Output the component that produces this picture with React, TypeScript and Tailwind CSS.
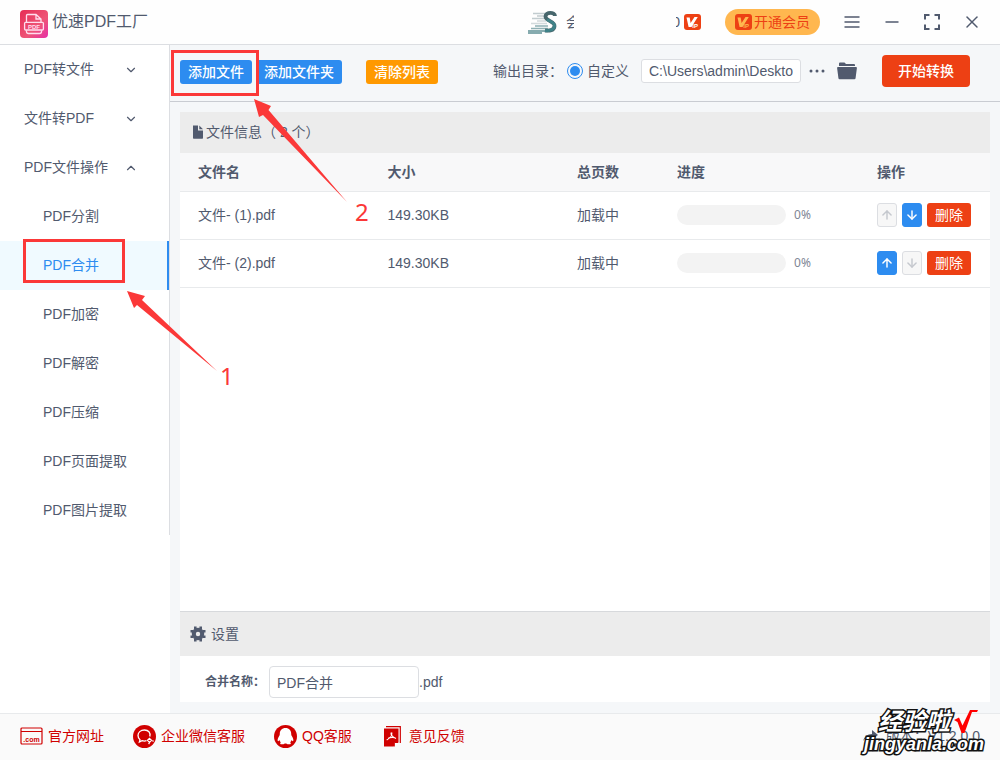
import { useState } from "react";
import { ChevronDown, ChevronUp, X, ArrowUp, ArrowDown } from "lucide-react";

const groups = [
  { title: "PDF转文件", open: false },
  { title: "文件转PDF", open: false },
  { title: "PDF文件操作", open: true },
];

const tools = ["PDF分割", "PDF合并", "PDF加密", "PDF解密", "PDF压缩", "PDF页面提取", "PDF图片提取"];

const files = [
  { name: "文件- (1).pdf", size: "149.30KB", pages: "加载中", progress: 0 },
  { name: "文件- (2).pdf", size: "149.30KB", pages: "加载中", progress: 0 },
];

function Logo() {
  return (
    <svg viewBox="0 0 28 28" className="mt-[3px] size-7 shrink-0" aria-hidden="true">
      <defs>
        <linearGradient id="logo" x1="0" y1="0" x2="1" y2="1">
          <stop offset="0" stopColor="#e62c55" />
          <stop offset="0.6" stopColor="#ee5577" />
          <stop offset="1" stopColor="#e62ea8" />
        </linearGradient>
      </defs>
      <rect width="28" height="28" rx="4" fill="url(#logo)" />
      <g fill="none" stroke="#fde" strokeWidth="1.3">
        <path d="M6.5 12V5.5a1 1 0 0 1 1-1h8.5l5 4.5v3M16 4.7V9h4.8" />
        <rect x="4.600" y="12.300" width="18.800" height="7.700" rx="1" />
        <path d="M6.500 20.300v1.500q0 1.700 2 1.700h11q2 0 2-1.700v-1.500" />
      </g>
      <text x="14" y="18.500" textAnchor="middle" fontSize="6" fontWeight="700" fontFamily="Liberation Sans, sans-serif" fill="#fde">PDF</text>
    </svg>
  );
}

function Avatar() {
  return (
    <svg viewBox="0 0 30 24" className="h-6 w-[30px]" aria-hidden="true">
      <g stroke="#a9b7bc" strokeWidth="1.500">
        <path d="M5 3.500h13M9 6h8M4 8.500h13" opacity="0.700" />
        <path d="M9 11h9M3 13.500h16" opacity="0.500" />
        <path d="M7 16h13M3 18.500h17" stroke="#8fb0b4" />
        <path d="M0 21h20M0 23h14" stroke="#5f9095" />
      </g>
      <path d="M27 6C27 2 17.500 1.500 17.500 6.500c0 4.500 9.500 5 9 9.500-.3 4.500-5 5-9.500 4.500" fill="none" stroke="#47666c" strokeWidth="3.800" />
      <path d="M19 9.500c3 2 8 3 7.500 6.500-.3 4-5 5-9.500 4.500" fill="none" stroke="#3f8288" strokeWidth="3" />
    </svg>
  );
}

function VipBadge({ cutout = "#fff" }: { cutout?: string }) {
  return (
    <svg viewBox="0 0 17 16" className="h-4 w-[17px] shrink-0" aria-hidden="true">
      <rect width="17" height="16" rx="3" fill="#ed4014" />
      <path d="M2.500 3.500h3.200l.9 5.500L10.500 3h3.300L7.500 13H4.600z" fill={cutout} />
      <text x="8.300" y="13.700" fontSize="6" fontWeight="700" fontFamily="Liberation Sans, sans-serif" fill={cutout}>IP</text>
    </svg>
  );
}

function Folder() {
  return (
    <svg viewBox="0 0 20 18" className="h-[18px] w-5" aria-hidden="true">
      <path d="M2 4V1.500Q2 .5 3 .5h4.500L9 2h8q1 0 1 1v1z" fill="#515a6e" />
      <path d="M1 5h18q1 0 .9 1L18.600 16q-.1 1.200-1.200 1.200H2.600q-1.100 0-1.200-1.200L.1 6Q0 5 1 5z" fill="#515a6e" />
    </svg>
  );
}

function Gear() {
  return (
    <svg viewBox="0 0 16 16" className="size-4" aria-hidden="true">
      <circle cx="8" cy="8" r="4.200" fill="none" stroke="#515a6e" strokeWidth="4" />
      <path d="M5.300.5v15M10.700.5v15M.5 5.300h15M.5 10.700h15" stroke="#515a6e" strokeWidth="2.600" strokeDasharray="2.500 10" />
    </svg>
  );
}

function Site() {
  return (
    <svg viewBox="0 0 23 18" className="h-[18px] w-[23px]" aria-hidden="true">
      <rect x="1" y="1" width="21" height="16" rx="1" fill="none" stroke="#d00000" strokeWidth="1.200" />
      <path d="M1 4.500h21" stroke="#d00000" />
      <text x="11.500" y="14.500" textAnchor="middle" fontSize="7" fontWeight="700" fontFamily="Liberation Sans, sans-serif" fill="#d00000">.com</text>
    </svg>
  );
}

function Wechat() {
  return (
    <svg viewBox="0 0 23 23" className="size-[23px]" aria-hidden="true">
      <circle cx="11.500" cy="11.500" r="11.500" fill="#d00000" />
      <path d="M16.800 11.500c1-4-1.500-6.500-5.300-6.500-4 0-6.500 2.500-6.500 5.500 0 2 .9 3.200 2 4.200l-.6 2.300 2.600-1.300q2.400.7 4.500 0" fill="none" stroke="#fff" strokeWidth="1.300" />
      <path d="M16.500 13.300l2 2-2 2-2-2zM19.500 15.500l1 1M15.500 18l1 1" fill="none" stroke="#fff" strokeWidth="1.200" />
    </svg>
  );
}

function QQ() {
  return (
    <svg viewBox="0 0 23 23" className="size-[23px]" aria-hidden="true">
      <circle cx="11.500" cy="11.500" r="11.500" fill="#d00000" />
      <path d="M11.500 3c-3.700 0-5.700 2.500-5.700 5.800 0 1.200-.2 1.800-.9 2.800-1 1.500-1.600 3.500-1.100 4.500.5.500 1.200-.3 1.700-1 .2 1 .7 1.700 1.300 2.300-1.100.5-.8 1.900 1 1.900 1.300 0 2.300-.4 3-.9h1.400c.7.500 1.700.9 3 .9 1.800 0 2.100-1.400 1-1.900.6-.6 1.100-1.300 1.300-2.300.5.700 1.200 1.500 1.700 1 .5-1-.1-3-1.100-4.500-.7-1-.9-1.600-.9-2.800C17.200 5.500 15.200 3 11.500 3z" fill="#fff" />
    </svg>
  );
}

function Feedback() {
  return (
    <svg viewBox="-3 0 23 21" className="h-[21px] w-[23px]" aria-hidden="true">
      <path d="M2 .7h14.300V17" fill="none" stroke="#d00000" strokeWidth="1.200" />
      <path d="M0 2.500h14.500V15.500l-5 5H0z" fill="#d00000" />
      <path d="M14.300 16.500h-4v4" fill="#fff" stroke="#d00000" />
      <path d="M7.300 6.500c-1.200 2 1 4.500 4.700 6M7.700 6.500c1 3-1.500 5.500-5 7.500M4 12.500c2-1.200 4.500-1.300 7-.8" fill="none" stroke="#fff" strokeWidth="1.100" />
    </svg>
  );
}

const links = [
  { label: "官方网址", icon: <Site /> },
  { label: "企业微信客服", icon: <Wechat /> },
  { label: "QQ客服", icon: <QQ /> },
  { label: "意见反馈", icon: <Feedback /> },
];

function MoveButton({ up, disabled }: { up?: boolean; disabled: boolean }) {
  const Icon = up ? ArrowUp : ArrowDown;
  return (
    <button
      aria-label={up ? "上移" : "下移"}
      disabled={disabled}
      className="flex h-6 w-5 items-center justify-center rounded-[3px] border border-[#2d8cf0] bg-[#2d8cf0] text-white disabled:border-[#dcdee2] disabled:bg-[#f7f7f7] disabled:text-[#c5c8ce]"
    >
      <Icon className="size-3.5 shrink-0" strokeWidth={2.500} />
    </button>
  );
}

function Header() {
  return (
    <header className="flex h-[45px] items-center border-b border-[#dcdee2] bg-[#fefefe] pr-[18px] pl-5">
      <Logo />
      <h1 className="ml-1 text-base">优速PDF工厂</h1>
      <div className="ml-auto flex items-center">
        <Avatar />
        <span className="ml-2 w-2 overflow-hidden text-sm whitespace-nowrap">会</span>
        <span className="ml-[102px] flex w-1 justify-end overflow-hidden text-sm">0</span>
        <span className="ml-1"><VipBadge /></span>
        <button className="ml-6 flex h-[26px] items-center gap-0.5 rounded-full bg-[#ffb74f] px-2.5 text-sm text-[#ed4014]">
          <VipBadge cutout="#ffb74f" />
          开通会员
        </button>
        <div className="ml-[22px] flex items-center gap-5">
          <button aria-label="菜单">
            <svg viewBox="0 0 20 20" className="size-5" fill="none" stroke="currentColor" strokeWidth="1.500">
              <path d="M2.500 5h15M2.500 10h15M2.500 15h15" />
            </svg>
          </button>
          <button aria-label="最小化">
            <svg viewBox="0 0 20 20" className="size-5" fill="none" stroke="currentColor" strokeWidth="1.500">
              <path d="M3.500 10h13" />
            </svg>
          </button>
          <button aria-label="最大化">
            <svg viewBox="0 0 20 20" className="size-5" fill="none" stroke="currentColor" strokeWidth="2">
              <path d="M3 7.500V3h4.500M12.500 3H17v4.500M17 12.500V17h-4.500M7.500 17H3v-4.500" />
            </svg>
          </button>
          <button aria-label="关闭"><X className="size-5" strokeWidth={1.800} /></button>
        </div>
      </div>
    </header>
  );
}

function Sidebar() {
  const [active, setActive] = useState("PDF合并");
  return (
    <aside className="w-[170px] shrink-0 bg-white">
      <nav className="border-r border-[#dcdee2]">
        {groups.map((g) => (
          <button key={g.title} aria-expanded={g.open} className="flex h-[49px] w-full items-center justify-between pr-[31px] pb-0.5 pl-6">
            {g.title}
            {g.open ? <ChevronUp className="mt-0.5 size-3.5" /> : <ChevronDown className="mt-0.5 size-3.5" />}
          </button>
        ))}
        {tools.map((t) => (
          <button
            key={t}
            onClick={() => setActive(t)}
            className={
              t === active
                ? "flex h-[49px] w-full items-center border-r-2 border-[#2d8cf0] bg-[#f0faff] pb-0.5 pl-[43px] text-[#2d8cf0]"
                : "flex h-[49px] w-full items-center pb-0.5 pl-[43px]"
            }
          >
            {t}
          </button>
        ))}
      </nav>
    </aside>
  );
}

function Toolbar() {
  return (
    <div className="flex h-[57px] items-center border-b border-[#c9ccd2] pr-[30px] pb-1 pl-2.5">
      <div className="flex pt-0.5">
        <button className="h-6 rounded-[3px] bg-[#2d8cf0] px-2 font-medium text-white">添加文件</button>
        <button className="ml-1 h-6 rounded-[3px] bg-[#2d8cf0] px-2 font-medium text-white">添加文件夹</button>
        <button className="ml-6 h-6 rounded-[3px] bg-[#ff9900] px-2 font-medium text-white">清除列表</button>
      </div>
      <div className="ml-auto flex items-center">
        <span>输出目录：</span>
        <label className="ml-1 flex items-center gap-1">
          <input
            type="radio"
            name="output"
            defaultChecked
            className="size-4 appearance-none rounded-full border border-[#2d8cf0] bg-[#2d8cf0] bg-clip-content p-0.5"
          />
          自定义
        </label>
        <input
          aria-label="输出目录"
          defaultValue="C:\Users\admin\Deskto"
          className="ml-3 h-6 w-40 rounded-[3px] border border-[#dcdee2] bg-white px-[7px]"
        />
        <button aria-label="更多" className="ml-2">
          <svg viewBox="0 0 16 16" className="size-4" fill="#515a6e">
            <circle cx="2" cy="8" r="1.500" />
            <circle cx="8" cy="8" r="1.500" />
            <circle cx="14" cy="8" r="1.500" />
          </svg>
        </button>
        <button aria-label="打开文件夹" className="ml-3"><Folder /></button>
        <button className="ml-[25px] h-8 rounded bg-[#ed4014] px-4 font-medium text-white">开始转换</button>
      </div>
    </div>
  );
}

function FileTable() {
  return (
    <table className="w-full table-fixed text-left">
      <thead className="bg-[#f8f8f9]">
        <tr className="h-[38px] border-b border-[#e8eaec]">
          <th className="pl-[18px] font-bold">文件名</th>
          <th className="pl-[18px] font-bold">大小</th>
          <th className="w-[100px] pl-[18px] font-bold">总页数</th>
          <th className="w-[200px] pl-[18px] font-bold">进度</th>
          <th className="w-[131px] pl-[18px] font-bold">操作</th>
        </tr>
      </thead>
      <tbody>
        {files.map((f, i) => (
          <tr key={f.name} className="h-12 border-b border-[#e8eaec]">
            <td className="pl-[18px]">{f.name}</td>
            <td className="pl-[18px]">{f.size}</td>
            <td className="pl-[18px]">{f.pages}</td>
            <td className="pl-[18px]">
              <div className="flex items-center gap-2">
                <div className="h-5 w-[109px] overflow-hidden rounded-full bg-[#f3f3f3]">
                  <div className="h-full bg-[#2d8cf0]" style={{ width: f.progress + "%" }} />
                </div>
                <span className="font-['Noto_Sans',sans-serif] text-xs text-[#808695]">{f.progress}%</span>
              </div>
            </td>
            <td className="pl-[18px]">
              <div className="flex gap-[5px]">
                <MoveButton up disabled={i === 0} />
                <MoveButton disabled={i === files.length - 1} />
                <button className="h-6 rounded-[3px] bg-[#ed4014] px-2 text-white">删除</button>
              </div>
            </td>
          </tr>
        ))}
      </tbody>
    </table>
  );
}

function Settings() {
  return (
    <section>
      <h2 className="flex h-[45px] items-center gap-[5px] border-t border-[#d7d9dc] bg-[#ececec] pl-2.5">
        <Gear />
        设置
      </h2>
      <div className="flex h-[46px] items-center pt-1.5 pl-[25px]">
        <label htmlFor="mergeName" className="text-xs font-bold">合并名称：</label>
        <input
          id="mergeName"
          defaultValue="PDF合并"
          className="ml-1 h-8 w-[150px] rounded border border-[#dcdee2] px-[7px]"
        />
        <span>.pdf</span>
      </div>
    </section>
  );
}

// step boxes, arrows and numbers drawn over the window
function Steps() {
  return (
    <div className="pointer-events-none">
      <div className="absolute top-[50px] left-[171px] h-[46px] w-[88px] border-3 border-[#fb3838]" />
      <div className="absolute top-[239px] left-[23px] h-11 w-[102px] border-3 border-[#fb3838]" />
      <svg viewBox="0 0 400 400" className="absolute top-0 left-0 size-[400px]" fill="#fb3838" aria-hidden="true">
        <path d="M254 99L271 106 268.500 110 347 202 263 115 259 117z" />
        <path d="M127 291L145 296 142 300 217 371 137 305 134 308z" />
      </svg>
      <span className="absolute top-[194px] left-[355px] font-['Noto_Sans',sans-serif] text-2xl leading-9 text-[#fb3838]">2</span>
      <span className="absolute top-[358px] left-[220px] font-['Noto_Sans',sans-serif] text-2xl leading-9 text-[#fb3838]">1</span>
    </div>
  );
}

function Footer() {
  return (
    <footer className="relative flex h-[47px] items-center gap-[29px] border-t border-[#e8eaec] bg-[#fafafa] px-5 pb-0.5 text-[#d00000]">
      {links.map((l) => (
        <a key={l.label} href="#" className="flex items-center gap-[5px]">
          {l.icon}
          {l.label}
        </a>
      ))}
      <span className="ml-auto flex items-center gap-2 text-[#515a6e]">
        <svg viewBox="0 0 16 14" className="h-3.5 w-4" aria-hidden="true">
          <path d="M1 12Q3 5 10 5V1l6 5-6 4V7Q5 7 1 12z" fill="#515a6e" />
        </svg>
        版本：V1.2.0.0
      </span>
      <div className="absolute right-4 bottom-1.5 flex flex-col items-end italic font-bold text-white [-webkit-text-stroke:3px_#111] [paint-order:stroke_fill]">
        <div className="flex items-start gap-1 pr-1.5">
          <span className="text-2xl leading-6">经验啦</span>
          <svg viewBox="0 0 24 24" className="size-6" aria-hidden="true">
            <path d="M0 10l5-2.500 3.500 8L16 0h8l-1 2h-5L10.500 23H7.500L3.500 12z" fill="#f00" />
          </svg>
        </div>
        <span className="text-lg leading-5">jingyanla.com</span>
      </div>
    </footer>
  );
}

export default function App() {
  return (
    <div className="relative flex min-h-screen flex-col bg-[#f5f7f9] font-['Liberation_Sans','Noto_Sans_CJK_SC',sans-serif] text-sm text-[#515a6e]">
      <Header />
      <div className="flex flex-1">
        <Sidebar />
        <main className="flex min-w-0 flex-1 flex-col">
          <Toolbar />
          <div className="mx-2.5 mt-2.5 mb-[11px] flex flex-1 flex-col bg-white">
            <h2 className="flex h-[41px] items-center bg-[#ececec] pb-0.5 pl-3">
              <svg viewBox="0 0 12 14" className="mr-0.5 h-3.5 w-3" fill="#515a6e" aria-hidden="true">
                <path d="M1 .5h5V5.500h5V13q0 .7-.7.7H1.700Q1 13.700 1 13zM7.300.5L11 4.300H7.300z" />
              </svg>
              文件信息（ {files.length} 个）
            </h2>
            <div className="flex-1">
              <FileTable />
            </div>
            <Settings />
          </div>
        </main>
      </div>
      <Footer />
      <Steps />
    </div>
  );
}
